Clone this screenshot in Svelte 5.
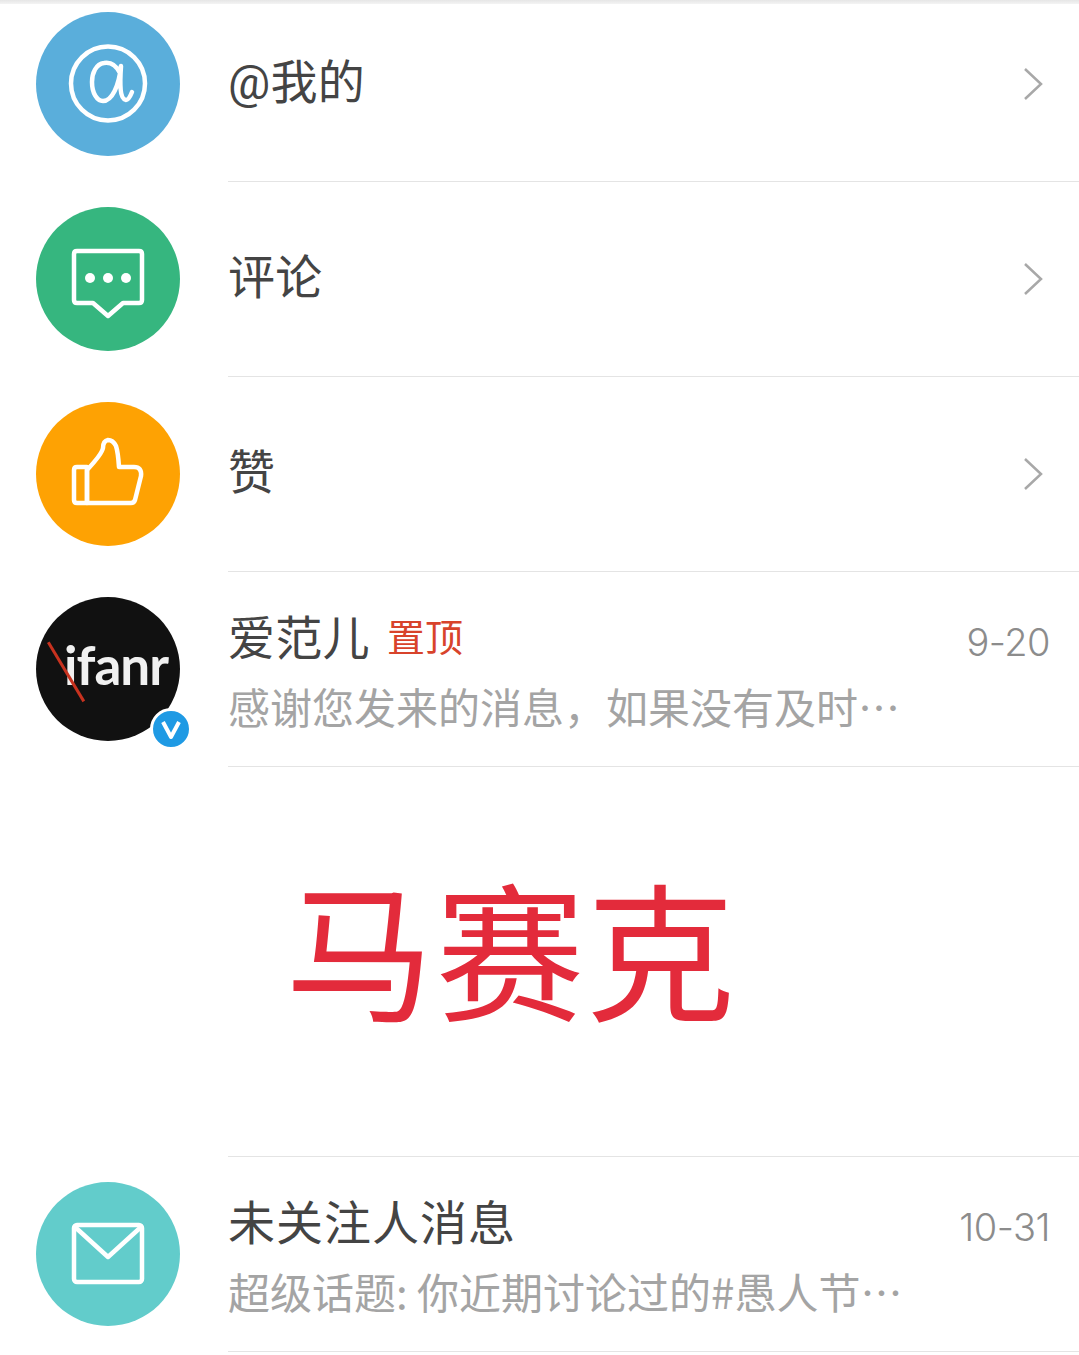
<script>
  const links = [
    { title: '@我的', color: '#5aaedb', icon: 'at' },
    { title: '评论', color: '#36b67f', icon: 'comment' },
    { title: '赞', color: '#fea203', icon: 'like' }
  ];
</script>

<div class="page">
  <div class="topbar"></div>

  <div class="list">
    {#each links as link}
      <div class="row">
        <div class="avatar" style="background: {link.color}">
          {#if link.icon === 'at'}
            <svg viewBox="0 0 144 144" class="glyph">
              <circle cx="72" cy="71.5" r="37" />
              <path d="M84 61 C80 53 74 50 68 51 C60 52 56 61 56 70 C56 81 61 89 67 89 C76 89 83 74 85 54 C84 68 83 87 90 88 C92 88 94 85 96 80" />
            </svg>
          {:else if link.icon === 'comment'}
            <svg viewBox="0 0 144 144" class="glyph">
              <path d="M41 44 H103 Q106 44 106 47 V93 Q106 96 103 96 H87 L72 109 L57 96 H41 Q38 96 38 93 V47 Q38 44 41 44 Z" />
              <circle class="dot" cx="54" cy="71" r="5" />
              <circle class="dot" cx="72" cy="71" r="5" />
              <circle class="dot" cx="90" cy="71" r="5" />
            </svg>
          {:else}
            <svg viewBox="0 0 144 144" class="glyph">
              <path d="M51 101 H95 Q98 101 99 98 L105 74 Q106 65 98 65 H83 Q82 50 80 44 Q77 38 72 38 Q67 39 67 46 Q66 52 51 68 Z" />
              <path d="M41 65 H51 V101 H41 Q38 101 38 98 V68 Q38 65 41 65 Z" />
            </svg>
          {/if}
        </div>
        <div class="body single">
          <span class="title">{link.title}</span>
          <svg class="chevron" viewBox="0 0 20 34">
            <path d="M2 2 L18 17 L2 32" />
          </svg>
        </div>
      </div>
    {/each}

    <div class="row">
      <div class="avatar ifanr">
        <span class="logo">ifanr</span>
        <span class="slash"></span>
        <span class="badge">
          <svg viewBox="0 0 36 36"><path d="M10 11 L18 26 L26 11" /></svg>
        </span>
      </div>
      <div class="body">
        <div class="top">
          <span class="title">爱范儿</span>
          <span class="pin">置顶</span>
          <span class="time">9-20</span>
        </div>
        <div class="sub">感谢您发来的消息，如果没有及时…</div>
      </div>
    </div>
  </div>

  <div class="mosaic">马赛克</div>

  <div class="row last">
    <div class="avatar" style="background: #62cccb">
      <svg viewBox="0 0 144 144" class="glyph">
        <rect x="38" y="43" width="68" height="57" rx="3" />
        <path d="M39 45 L72 75 L105 45" />
      </svg>
    </div>
    <div class="body">
      <div class="top">
        <span class="title wide">未关注人消息</span>
        <span class="time">10-31</span>
      </div>
      <div class="sub">超级话题: 你近期讨论过的#愚人节…</div>
    </div>
  </div>
</div>

<style>
  :global(body) {
    margin: 0;
    background: #fff;
  }

  .page {
    position: relative;
    width: 1079px;
    height: 1355px;
    overflow: hidden;
    font-family: "Noto Sans CJK SC", "Noto Sans", sans-serif;
    color: #444;
  }

  .topbar {
    position: absolute;
    top: 0;
    left: 0;
    right: 0;
    height: 4px;
    background: linear-gradient(#e6e6e6, #f4f4f4);
    z-index: 2;
  }

  .list {
    margin-top: -13px;
  }

  .row {
    display: flex;
    height: 195px;
  }

  .avatar {
    position: relative;
    flex: none;
    width: 144px;
    height: 144px;
    margin: 25px 48px 0 36px;
    border-radius: 50%;
  }

  .glyph {
    display: block;
    width: 144px;
    height: 144px;
    fill: none;
    stroke: #fff;
    stroke-width: 4.5;
    stroke-linejoin: round;
    stroke-linecap: round;
  }

  .glyph .dot {
    fill: #fff;
    stroke: none;
  }

  .body {
    flex: 1;
    min-width: 0;
    display: flex;
    flex-direction: column;
    border-bottom: 1px solid #e4e4e4;
    padding: 28px 29px 0 0;
    box-sizing: border-box;
  }

  .body.single {
    flex-direction: row;
    align-items: center;
    justify-content: space-between;
    padding: 0 36px 0 0;
  }

  .single .title {
    margin-top: -2px;
  }

  .top {
    display: flex;
    align-items: center;
    height: 78px;
  }

  .title {
    font-family: Roboto, "Noto Sans CJK SC", sans-serif;
    font-weight: 400;
    font-size: 47px;
    line-height: 60px;
    letter-spacing: 0.3px;
  }

  .title.wide {
    letter-spacing: 1px;
  }

  .pin {
    margin-left: 17px;
    margin-top: -8px;
    font-size: 38px;
    line-height: 48px;
    color: #d8432b;
  }

  .time {
    margin-left: auto;
    margin-top: 6px;
    font-family: Inter, sans-serif;
    font-weight: 300;
    font-size: 38px;
    letter-spacing: -0.5px;
    color: #8c8c8c;
  }

  .sub {
    font-size: 42px;
    line-height: 56px;
    color: #a4a4a4;
    white-space: nowrap;
  }

  .chevron {
    width: 20px;
    height: 34px;
    fill: none;
    stroke: #a8a8a8;
    stroke-width: 2.5;
  }

  .ifanr {
    background: #111;
  }

  .logo {
    position: absolute;
    left: 28px;
    top: 33px;
    font-family: Lato, sans-serif;
    font-weight: 700;
    font-size: 53px;
    line-height: 70px;
    letter-spacing: -1px;
    color: #f0f0f0;
  }

  .slash {
    position: absolute;
    left: 11px;
    top: 46px;
    width: 3px;
    height: 69px;
    background: #c8321f;
    transform: rotate(-31deg);
    transform-origin: top left;
  }

  .badge {
    position: absolute;
    left: 114px;
    top: 111px;
    width: 42px;
    height: 42px;
    box-sizing: border-box;
    border: 3px solid #fff;
    border-radius: 50%;
    background: #1f9ae4;
    display: flex;
  }

  .badge svg {
    width: 36px;
    height: 36px;
    fill: none;
    stroke: #fff;
    stroke-width: 4;
    stroke-linejoin: round;
  }

  .mosaic {
    height: 389px;
    box-sizing: border-box;
    padding: 83px 0 0 285px;
    font-size: 149px;
    line-height: 190px;
    letter-spacing: 1.5px;
    color: #e32b3b;
    white-space: nowrap;
  }

  .last {
    border-top: 1px solid #e4e4e4;
    margin-left: 228px;
  }

  .last .avatar {
    margin-left: -192px;
  }
</style>
